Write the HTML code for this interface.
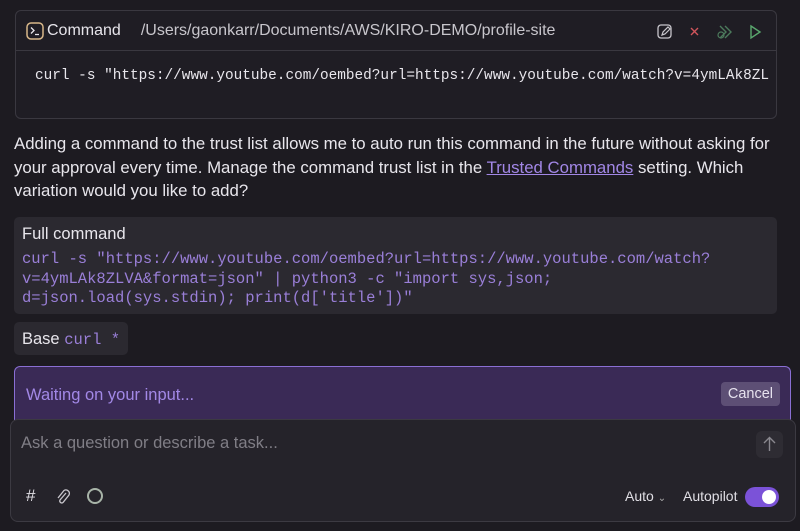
<!DOCTYPE html>
<html><head><meta charset="utf-8"><style>
*{box-sizing:border-box;margin:0;padding:0}
body{width:800px;height:531px;background:#1d1b21;color:#e8e6ec;font-family:"Liberation Sans",sans-serif;position:relative;overflow:hidden}
.mono{font-family:"Liberation Mono",monospace}
.cmd{position:absolute;left:15px;top:10px;width:762px;height:109px;border:1px solid #3a3840;border-radius:6px;background:#1f1d24;overflow:hidden}
.cmd .hd{height:40px;border-bottom:1px solid #3a3840;display:flex;align-items:center;font-size:16px;color:#e6e4ea}
.cmd .path{color:#c8c6cc;margin-left:20px}
.cmd .body{position:absolute;left:19px;top:57px;font-size:14.4px;color:#e8e6ec;white-space:nowrap}
.p{position:absolute;left:14px;top:132px;width:775px;font-size:16.8px;line-height:23.5px}
.p a{color:#a287e6;text-decoration:underline}
.full{position:absolute;left:14px;top:217px;width:763px;height:97px;background:#2b2930;border-radius:5px}
.full .t{position:absolute;left:8px;top:8px;font-size:16.5px}
.full .c{position:absolute;left:8px;top:33px;font-size:15.5px;line-height:19.5px;color:#9a7fd8;white-space:pre}
.base{position:absolute;left:14px;top:322px;width:114px;height:33px;background:#2b2930;border-radius:5px;font-size:16.5px;padding:8px 8px;white-space:nowrap}
.base span{color:#9a7fd8;font-size:15.5px}
.wait{position:absolute;left:14px;top:366px;width:777px;height:60px;background:#3a2a56;border:1px solid #8a6fd4;border-bottom:none;border-radius:6px 6px 0 0}
.wait .t{position:absolute;left:11px;top:19px;color:#a288e6;font-size:16.5px}
.wait .b{position:absolute;right:10px;top:15px;background:#5d4f75;color:#e6e2ee;font-size:14.5px;padding:4px 7px;border-radius:4px}
.inp{position:absolute;left:10px;top:419px;width:786px;height:103px;background:#25232a;border:1px solid #3c3a42;border-radius:8px}
.inp .ph{position:absolute;left:10px;top:14px;color:#807e86;font-size:16.5px}
.inp .up{position:absolute;right:12px;top:11px;width:27px;height:27px;border-radius:6px;background:#2e2c33}
.ft{position:absolute;top:68px;font-size:14px;color:#e0dee4;white-space:nowrap}
.tog{position:absolute;right:16px;top:67px;width:34px;height:20px;border-radius:10px;background:#7b52d8}
.tog::after{content:"";position:absolute;right:3px;top:3px;width:14px;height:14px;border-radius:7px;background:#fff}
</style></head><body>
<div class="cmd">
 <div class="hd">
  <svg style="margin-left:10px" width="18" height="18" viewBox="0 0 18 18"><rect x="1" y="1" width="16" height="16" rx="4" fill="none" stroke="#d9b88a" stroke-width="1.5"/><path d="M5 5.5l3 3-3 3M9 12.5h4" fill="none" stroke="#e8e6ec" stroke-width="1.3"/></svg>
  <span style="margin-left:3px">Command</span><span class="path">/Users/gaonkarr/Documents/AWS/KIRO-DEMO/profile-site</span>
  <svg style="position:absolute;left:640px;top:12px" width="130" height="18" viewBox="0 0 130 18">
   <rect x="2" y="2" width="13" height="13" rx="3" fill="none" stroke="#c8c6cc" stroke-width="1.3"/><path d="M6 12l1-3 5-5 2 2-5 5z" fill="none" stroke="#c8c6cc" stroke-width="1.2"/>
   <path d="M35 5l7 7M42 5l-7 7" stroke="#d0555b" stroke-width="1.4"/>
   <path d="M64 3l6 6-6 6M69 3l6 6-6 6" fill="none" stroke="#4c7a5c" stroke-width="1.4"/><circle cx="65" cy="12" r="3" fill="none" stroke="#4c7a5c" stroke-width="1.2"/>
   <path d="M95 3l9 6-9 6z" fill="none" stroke="#5aa86e" stroke-width="1.4"/>
  </svg>
 </div>
 <div class="body mono">curl -s "https://www.youtube.com/oembed?url=https://www.youtube.com/watch?v=4ymLAk8ZL</div>
</div>
<div class="p">Adding a command to the trust list allows me to auto run this command in the future without asking for your approval every time. Manage the command trust list in the <a>Trusted Commands</a> setting. Which variation would you like to add?</div>
<div class="full"><div class="t">Full command</div><div class="c mono">curl -s "https://www.youtube.com/oembed?url=https://www.youtube.com/watch?
v=4ymLAk8ZLVA&amp;format=json" | python3 -c "import sys,json;
d=json.load(sys.stdin); print(d['title'])"</div></div>
<div class="base">Base <span class="mono">curl *</span></div>
<div class="wait"><div class="t">Waiting on your input...</div><div class="b">Cancel</div></div>
<div class="inp">
 <div class="ph">Ask a question or describe a task...</div>
 <div class="up"><svg width="27" height="27" viewBox="0 0 27 27"><path d="M13.5 20V7M8 12l5.5-5.5L19 12" fill="none" stroke="#8a888f" stroke-width="1.4"/></svg></div>
 <div class="ft" style="left:15px;font-size:17px;top:66px">#</div>
 <svg style="position:absolute;left:44px;top:68px" width="16" height="18" viewBox="0 0 16 18"><path d="M11 5l-6 7a2 2 0 003 2.5l6-7.5a3.5 3.5 0 00-5-4.5L3 10" fill="none" stroke="#c8c6cc" stroke-width="1.3"/></svg>
 <svg style="position:absolute;left:75px;top:67px" width="18" height="18"><circle cx="9" cy="9" r="7" fill="none" stroke="#a8b4a8" stroke-width="2"/></svg>
 <div class="ft" style="left:614px">Auto <span style="font-size:10px;color:#aaa">&#8964;</span></div>
 <div class="ft" style="left:672px">Autopilot</div>
 <div class="tog"></div>
</div>
</body></html>
